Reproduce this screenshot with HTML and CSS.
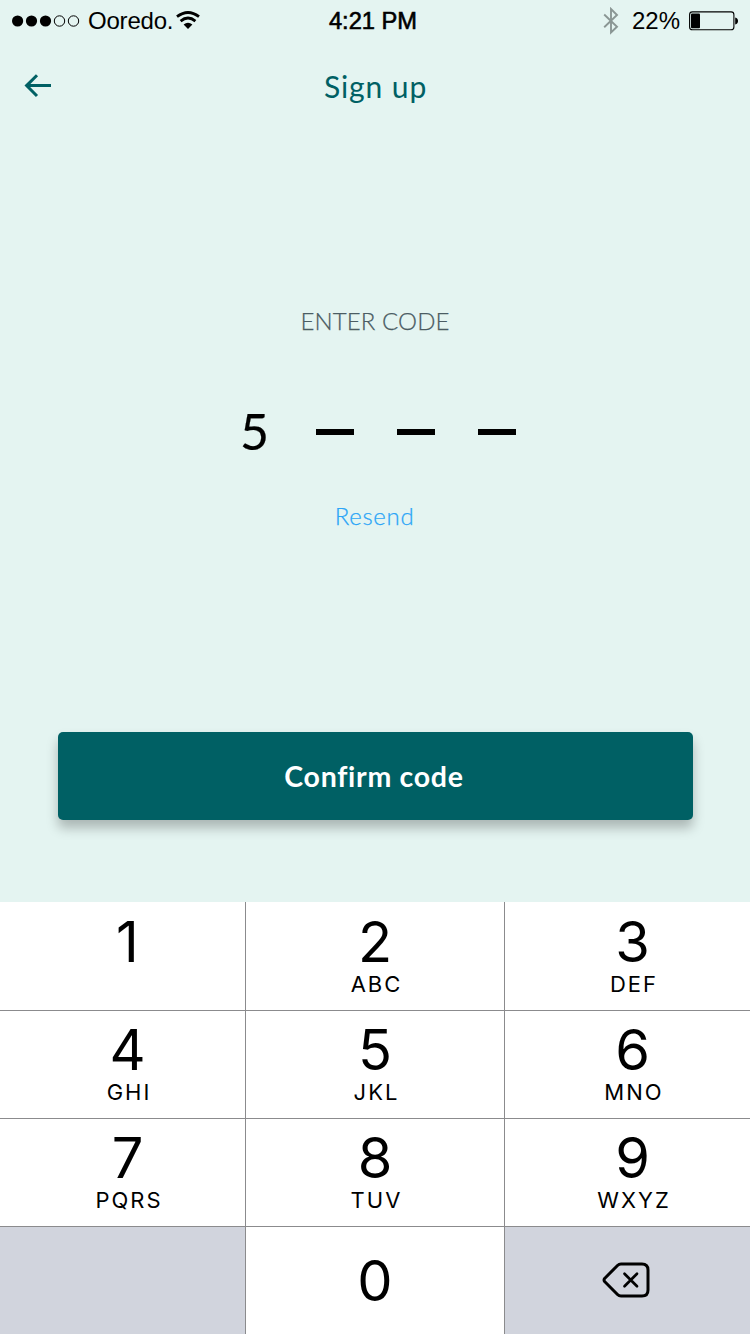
FILE: index.html
```html
<!DOCTYPE html>
<html lang="en">
<head>
<meta charset="utf-8">
<title>Sign up</title>
<link rel="stylesheet" href="styles.css">
</head>
<body>
<div class="screen">
  <div class="status">
    <div class="status-left">
      <svg class="signal" width="68" height="12" viewBox="0 0 68 12">
        <circle cx="5.6" cy="6" r="5.6"/><circle cx="19.5" cy="6" r="5.6"/><circle cx="33.5" cy="6" r="5.6"/>
        <g fill="none" stroke="#000"><circle cx="47.5" cy="6" r="5.2"/><circle cx="61.5" cy="6" r="5.2"/></g>
      </svg>
      <span class="carrier">Ooredo.</span>
      <svg class="wifi" width="24" height="18" viewBox="0 0 24 18">
        <g fill="none" stroke="#000" stroke-width="2.8"><path d="M1 5.7Q12-2.8 23 5.7"/><path d="M4.600 10.100Q12 4 19.400 10.100"/></g>
        <path d="M7.600 13.400Q12 10 16.400 13.400L12 18Z"/>
      </svg>
    </div>
    <div class="time">4:21 PM</div>
    <div class="status-right">
      <svg class="bluetooth" width="16" height="28" viewBox="0 0 16 28"><path d="M1.2 7.5L14 19.7L8 25.5V2L14 8L1.2 20.2" fill="none" stroke="#8a9694" stroke-width="1.9"/></svg>
      <span class="percent">22%</span>
      <svg class="battery" width="50" height="20" viewBox="0 0 50 20">
        <rect x=".6" y=".9" width="44.3" height="17.9" rx="2.8" fill="none" stroke="#000" stroke-width="1.1"/>
        <rect x="2" y="2.6" width="9" height="14.6" rx="1"/><path d="M46.2 6.4Q49 7.2 49 10T46.2 13.6Z"/>
      </svg>
    </div>
  </div>
  <header class="nav">
    <svg class="back" width="28" height="24" viewBox="0 0 28 24"><path d="M27 11.6H2.4M13 1.2L2.6 11.6L13 22" fill="none" stroke="#006064" stroke-width="3"/></svg>
    <h1 class="title">Sign up</h1>
  </header>
  <main class="form">
    <div class="label">ENTER CODE</div>
    <div class="code"><span class="digit">5</span><i class="blank"></i><i class="blank"></i><i class="blank"></i></div>
    <a class="resend">Resend</a>
    <button class="confirm">Confirm code</button>
  </main>
  <div class="keypad">
    <div class="key left"><b class="num one">1</b></div>
    <div class="key"><b class="num">2</b><span class="abc">ABC</span></div>
    <div class="key right"><b class="num">3</b><span class="abc">DEF</span></div>
    <div class="key left"><b class="num">4</b><span class="abc">GHI</span></div>
    <div class="key"><b class="num">5</b><span class="abc">JKL</span></div>
    <div class="key right"><b class="num">6</b><span class="abc">MNO</span></div>
    <div class="key left"><b class="num">7</b><span class="abc">PQRS</span></div>
    <div class="key"><b class="num">8</b><span class="abc">TUV</span></div>
    <div class="key right"><b class="num">9</b><span class="abc">WXYZ</span></div>
    <div class="key gray last"></div>
    <div class="key last"><b class="num">0</b></div>
    <div class="key right gray last">
      <svg class="delete" width="48" height="36" viewBox="0 0 48 36" fill="none" stroke="#000" stroke-width="3" stroke-linecap="round" stroke-linejoin="round"><path d="M19 2H40Q46 2 46 8V28Q46 34 40 34H19Q17 34 15.500 32.500L2.600 19.500Q1.500 18 2.600 16.500L15.500 3.500Q17 2 19 2Z"/><path d="M22.500 11.700L35 24.200M35 11.700L22.500 24.200" stroke-width="2.700"/></svg>
    </div>
  </div>
</div>
</body>
</html>
```
FILE: styles.css
```css
* { box-sizing: border-box; }
body { margin: 0; }
.screen {
  width: 750px;
  height: 1334px;
  display: flex;
  flex-direction: column;
  background: #e4f4f1;
  color: #000;
  overflow: hidden;
}
.status {
  height: 42px;
  display: grid;
  grid-template-columns: 1fr auto 1fr;
  align-items: center;
  padding: 0 12px;
  font: 24px/42px "Liberation Sans", Arial, sans-serif;
}
.status svg { flex: none; display: block; }
.status-left, .status-right { display: flex; align-items: center; }
.carrier { width: 87px; margin-left: 8px; letter-spacing: -0.2px; }
.wifi { margin-left: 1px; margin-top: -3px; }
.time { font-size: 23.7px; -webkit-text-stroke: 0.6px #000; margin-right: 4px; }
.status-right { justify-content: flex-end; }
.bluetooth { margin-right: 13px; }
.percent { margin-right: 9px; }
.battery { margin-right: -1px; }
.nav {
  height: 90px;
  display: grid;
  grid-template-columns: 28px 1fr 28px;
  align-items: start;
  padding: 0 23px 0 24px;
  color: #006064;
}
.back { margin-top: 32px; }
.title {
  margin: 22px 0 0;
  text-align: center;
  font: 400 30px/44px Lato, sans-serif;
  letter-spacing: 0.9px;
}
.form {
  height: 770px;
  display: flex;
  flex-direction: column;
  align-items: center;
  font-family: Lato, sans-serif;
}
.label {
  margin-top: 174px;
  font-size: 24px;
  line-height: 30px;
  font-weight: 300;
  letter-spacing: 0.1px;
  color: #4b5c63;
  -webkit-text-stroke: 0.25px #4b5c63;
}
.code { display: flex; align-items: center; height: 60px; margin-top: 66px; padding-left: 8px; }
.digit { width: 28px; margin: -3px 48px 0 -2px; font: 50px/60px Lato, sans-serif; -webkit-text-stroke: 0.2px #000; }
.blank { width: 38px; height: 6px; background: #000; }
.blank + .blank { margin-left: 43px; }
.resend {
  margin-top: 39px;
  margin-right: 1px;
  font-size: 24px;
  line-height: 30px;
  font-weight: 300;
  letter-spacing: 0.7px;
  color: #2ba5f7;
  -webkit-text-stroke: 0.25px #2ba5f7;
}
.confirm {
  width: 635px;
  height: 88px;
  margin: 201px 0 0 1px;
  padding: 0 3px 0 0;
  border: 0;
  border-radius: 5px;
  background: #006064;
  box-shadow: 0 8px 12px rgba(0, 0, 0, 0.25);
  color: #fff;
  font: 700 28.5px/86px Lato, sans-serif;
  letter-spacing: 0.7px;
}
.keypad {
  height: 432px;
  display: grid;
  grid-template-columns: 246px 259px 245px;
  grid-template-rows: 109px 108px 108px 107px;
  font-family: Inter, sans-serif;
}
.key {
  display: flex;
  flex-direction: column;
  align-items: center;
  justify-content: flex-end;
  padding-bottom: 13px;
  background: #fff;
  border-right: 1px solid #8b8b8d;
  border-bottom: 1px solid #8b8b8d;
}
.key.left { padding-left: 10px; }
.key.right { border-right: 0; padding-left: 10px; }
.key.last { border-bottom: 0; }
.key.gray { background: #d1d4dd; }
.num { margin-bottom: 2px; font-size: 56px; line-height: 54px; font-weight: 400; }
.num.one { margin-bottom: 28px; }
.abc { margin-right: -3px; font-size: 22px; line-height: 26px; letter-spacing: 2px; }
.key.last { justify-content: center; padding-bottom: 0; }
.key.last .num { margin-bottom: 0; }
.key.gray.right { padding: 0 3px 2px 0; }
.delete { display: block; }
```
